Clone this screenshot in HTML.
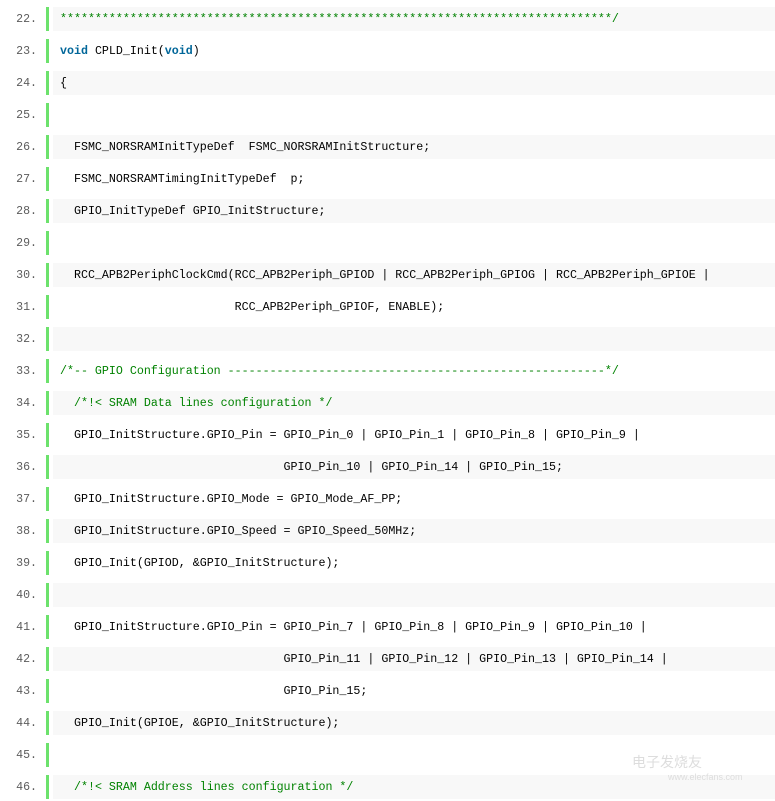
<!DOCTYPE html>
<html><head><meta charset="utf-8"><style>
html,body{margin:0;padding:0;background:#fff;width:775px;height:801px;overflow:hidden}
.r{position:absolute;left:0;width:775px;height:24px}
.n{position:absolute;left:0;top:1px;width:37px;text-align:right;font:11.6px "Liberation Mono",monospace;color:#5c5c5c;line-height:24px}
.b{position:absolute;left:46px;top:0;width:3px;height:24px;background:#6ce26c}
.g{position:absolute;left:53px;top:0;right:0;height:24px;background:#f8f8f8}
.c{position:absolute;left:60px;top:1px;font:11.65px "Liberation Mono",monospace;color:#000;line-height:24px;white-space:pre}
.k{color:#006699;font-weight:bold}
.m{color:#008200}
</style></head><body>
<script>
const L=[
'<span class="m">*******************************************************************************/</span>',
'<span class="k">void</span> CPLD_Init(<span class="k">void</span>)',
'{',
'',
'  FSMC_NORSRAMInitTypeDef  FSMC_NORSRAMInitStructure;',
'  FSMC_NORSRAMTimingInitTypeDef  p;',
'  GPIO_InitTypeDef GPIO_InitStructure;',
'',
'  RCC_APB2PeriphClockCmd(RCC_APB2Periph_GPIOD | RCC_APB2Periph_GPIOG | RCC_APB2Periph_GPIOE |',
'                         RCC_APB2Periph_GPIOF, ENABLE);',
'',
'<span class="m">/*-- GPIO Configuration ------------------------------------------------------*/</span>',
'  <span class="m">/*!&lt; SRAM Data lines configuration */</span>',
'  GPIO_InitStructure.GPIO_Pin = GPIO_Pin_0 | GPIO_Pin_1 | GPIO_Pin_8 | GPIO_Pin_9 |',
'                                GPIO_Pin_10 | GPIO_Pin_14 | GPIO_Pin_15;',
'  GPIO_InitStructure.GPIO_Mode = GPIO_Mode_AF_PP;',
'  GPIO_InitStructure.GPIO_Speed = GPIO_Speed_50MHz;',
'  GPIO_Init(GPIOD, &amp;GPIO_InitStructure);',
'',
'  GPIO_InitStructure.GPIO_Pin = GPIO_Pin_7 | GPIO_Pin_8 | GPIO_Pin_9 | GPIO_Pin_10 |',
'                                GPIO_Pin_11 | GPIO_Pin_12 | GPIO_Pin_13 | GPIO_Pin_14 |',
'                                GPIO_Pin_15;',
'  GPIO_Init(GPIOE, &amp;GPIO_InitStructure);',
'',
'  <span class="m">/*!&lt; SRAM Address lines configuration */</span>'];
let h='';
L.forEach((t,i)=>{const top=7+i*32;
h+=`<div class="r" style="top:${top}px">${i%2==0?'<div class="g"></div>':''}<div class="n">${22+i}.</div><div class="b"></div><div class="c">${t}</div></div>`;});
document.write(h);
</script>
<div style="position:absolute;left:632px;top:752px;font:14px 'Noto Sans CJK SC',sans-serif;color:#ddd">电子发烧友</div>
<div style="position:absolute;left:668px;top:772px;font:9px 'Liberation Sans',sans-serif;color:#ddd">www.elecfans.com</div>
</body></html>
